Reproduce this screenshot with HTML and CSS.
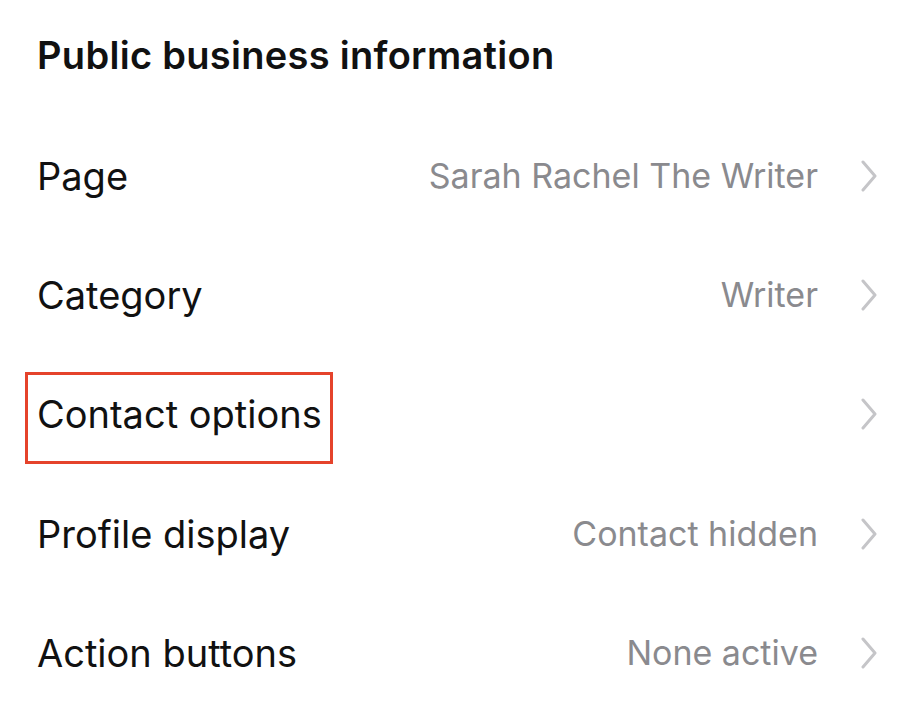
FILE: index.html
```html
<!DOCTYPE html>
<html>
<head>
<meta charset="utf-8">
<link rel="stylesheet" href="styles.css">
</head>
<body>
<div class="screen">
  <h1 class="title">Public business information</h1>
  <div class="list">
    <div class="row">
      <span class="label">Page</span>
      <span class="value">Sarah Rachel The Writer</span>
      <svg class="chev" viewBox="0 0 18 32" width="18" height="32"><path d="M3 2 L15 16 L3 30" /></svg>
    </div>
    <div class="row">
      <span class="label">Category</span>
      <span class="value">Writer</span>
      <svg class="chev" viewBox="0 0 18 32" width="18" height="32"><path d="M3 2 L15 16 L3 30" /></svg>
    </div>
    <div class="row">
      <span class="label highlight">Contact options</span>
      <span class="value"></span>
      <svg class="chev" viewBox="0 0 18 32" width="18" height="32"><path d="M3 2 L15 16 L3 30" /></svg>
    </div>
    <div class="row">
      <span class="label">Profile display</span>
      <span class="value">Contact hidden</span>
      <svg class="chev" viewBox="0 0 18 32" width="18" height="32"><path d="M3 2 L15 16 L3 30" /></svg>
    </div>
    <div class="row">
      <span class="label">Action buttons</span>
      <span class="value">None active</span>
      <svg class="chev" viewBox="0 0 18 32" width="18" height="32"><path d="M3 2 L15 16 L3 30" /></svg>
    </div>
  </div>
</div>
</body>
</html>
```

FILE: styles.css
```css
* { box-sizing: border-box; }
html, body {
  margin: 0;
  padding: 0;
  background: #ffffff;
}
body {
  font-family: Inter, "Noto Sans", sans-serif;
  color: #111111;
}
.screen {
  width: 902px;
  height: 708px;
  padding: 0 24px 0 37px;
  overflow: hidden;
}
.title {
  margin: 0;
  padding-top: 30px;
  height: 116px;
  font-size: 38px;
  font-weight: 600;
  line-height: 50px;
  letter-spacing: 0.3px;
}
.list {
  display: flex;
  flex-direction: column;
}
.row {
  height: 119.3px;
  display: flex;
  align-items: center;
}
.label {
  font-size: 38px;
  line-height: 46px;
  font-weight: 400;
  letter-spacing: 0;
  position: relative;
}
.highlight::after {
  content: "";
  position: absolute;
  left: -12px;
  right: -11px;
  top: -19px;
  bottom: -27px;
  border: 3px solid #e5432b;
}
.value {
  margin-left: auto;
  font-size: 34px;
  line-height: 46px;
  color: #8a8a8e;
  letter-spacing: 0;
  margin-right: 42px;
}
.chev {
  flex: none;
  fill: none;
  stroke: #c5c5c8;
  stroke-width: 3;
  stroke-linecap: round;
  stroke-linejoin: round;
}
```
